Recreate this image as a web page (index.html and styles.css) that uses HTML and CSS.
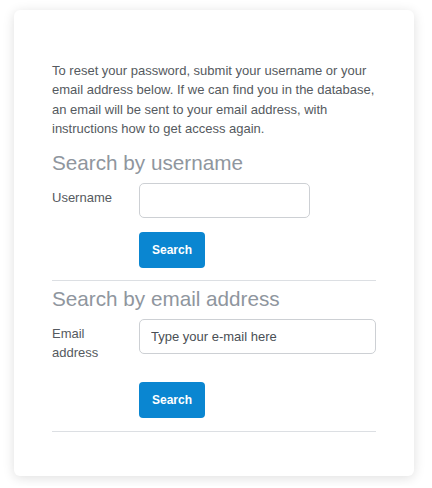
FILE: index.html
```html
<!DOCTYPE html>
<html lang="en">
<head>
  <meta charset="UTF-8">
  <meta name="viewport" content="width=device-width, initial-scale=1.0">
  <title>Forgotten password</title>
  <link rel="stylesheet" href="styles.css">
</head>
<body>

  <div class="card">
    <p class="intro">To reset your password, submit your username or your email address below. If we can find you in the database, an email will be sent to your email address, with instructions how to get access again.</p>

    <!-- Search by username -->
    <form class="search-form">
      <h2>Search by username</h2>
      <div class="row">
        <label for="username">Username</label>
        <input type="text" id="username" class="short">
      </div>
      <div class="row">
        <span class="spacer"></span>
        <button type="submit">Search</button>
      </div>
    </form>

    <!-- Search by email -->
    <form class="search-form">
      <h2>Search by email address</h2>
      <div class="row">
        <label for="email">Email address</label>
        <input type="text" id="email" value="Type your e-mail here">
      </div>
      <div class="row">
        <span class="spacer"></span>
        <button type="submit">Search</button>
      </div>
    </form>
  </div>

</body>
</html>
```

FILE: styles.css
```css
body {
  font-family: "Liberation Sans", Arial, sans-serif;
  background-color: #ffffff;
  color: #555a60;
  margin: 0;
  padding: 10px 14px;
}
.card {
  width: 400px;
  box-sizing: border-box;
  padding: 51px 38px 44px;
  background: #ffffff;
  border-radius: 6px;
  box-shadow: 0 2px 12px rgba(0, 0, 0, 0.13);
}
.intro {
  font-size: 13px;
  line-height: 19.3px;
  margin: 0 0 13px;
}
.search-form {
  border-top: 1px solid #dcdfe3;
}
.search-form:first-of-type {
  border-top: none;
}
.search-form:last-child {
  border-bottom: 1px solid #dcdfe3;
}
.search-form + .search-form {
  margin-top: 12px;
}
h2 {
  font-size: 20.7px;
  font-weight: normal;
  line-height: 24px;
  color: #8f969e;
  margin: 0 0 8px;
}
.search-form + .search-form h2 {
  margin-top: 6px;
}
.row {
  display: flex;
  align-items: flex-start;
  margin-bottom: 14px;
}
.row:last-child {
  margin-bottom: 12px;
}
.search-form:last-child .row:last-child {
  margin-bottom: 13px;
}
label, .spacer {
  width: 87px;
  flex-shrink: 0;
}
label {
  font-size: 13px;
  line-height: 18.5px;
  padding: 6px 20px 6px 0;
  box-sizing: border-box;
}
input {
  flex: 1;
  height: 35px;
  box-sizing: border-box;
  padding: 0 11px;
  font-family: inherit;
  font-size: 13px;
  color: #4a4f55;
  border: 1px solid #cdd0d4;
  border-radius: 5px;
  background: #ffffff;
}
input.short {
  flex: none;
  width: 171px;
}
button {
  height: 36px;
  padding: 0 13px;
  font-family: inherit;
  font-size: 12px;
  font-weight: bold;
  color: #ffffff;
  background-color: #0a86d1;
  border: none;
  border-radius: 4px;
  cursor: pointer;
}
button:hover {
  background-color: #0874b5;
}
```
